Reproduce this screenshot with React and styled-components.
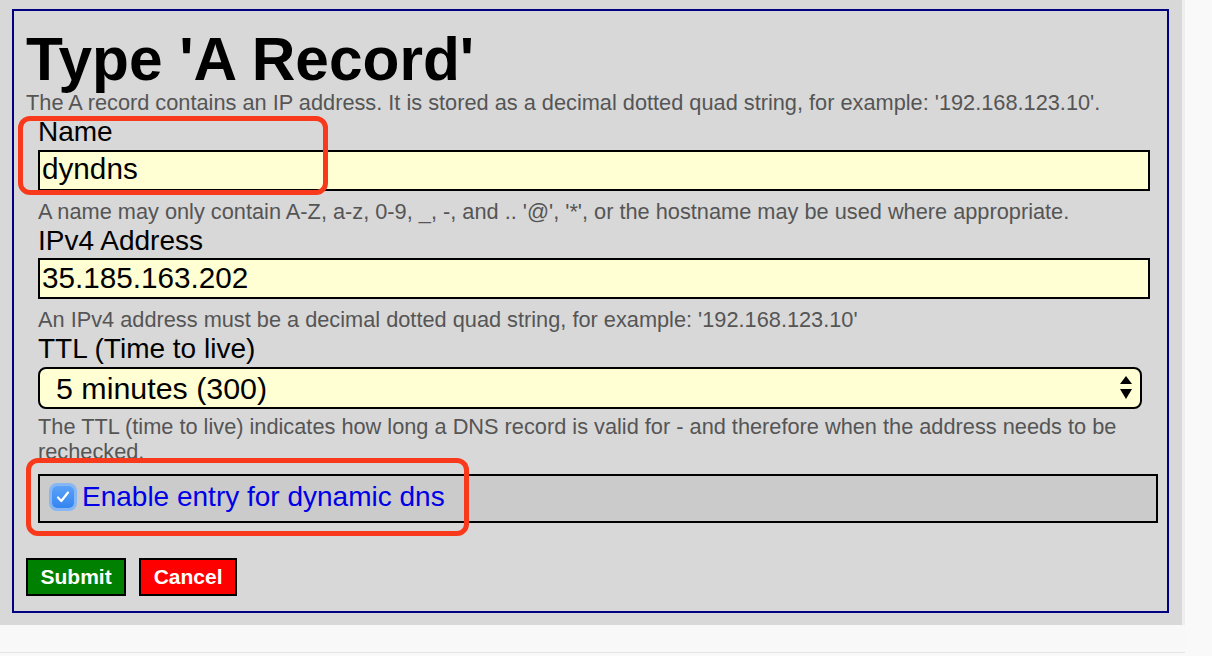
import React from "react";
import styled, { createGlobalStyle } from "styled-components";

const GlobalStyle = createGlobalStyle`
  html, body {
    margin: 0;
    padding: 0;
    background: #f9f9f9;
    font-family: "Liberation Sans", Arial, Helvetica, sans-serif;
  }
  * {
    box-sizing: border-box;
  }
`;

const Screen = styled.div`
  display: flex;
  flex-direction: column;
  width: 1212px;
  height: 656px;
  overflow: hidden;
`;

const Page = styled.div`
  position: relative;
  width: 1185px;
  height: 625px;
  padding: 9px 0 0 12px;
  background: #d8d8d8;
  border-right: 3px solid #eeeeee;
`;

const BottomStrip = styled.div`
  width: 1185px;
  height: 28px;
  border-bottom: 1px solid #e4e4e4;
  background: #f8f8f8;
`;

const Panel = styled.form`
  width: 1157px;
  height: 604px;
  padding: 17px 12px 0;
  border: 2px solid #000080;
  background: #d8d8d8;
`;

const Title = styled.h1`
  margin: 0;
  font-size: 60.4px;
  line-height: 62px;
  font-weight: 700;
  color: #000;
`;

const Description = styled.p`
  margin: ${({ $gap }) => $gap || 0}px 0 0;
  font-size: 21.75px;
  line-height: 25px;
  color: #555;
`;

const FieldGroup = styled.div`
  margin-left: 12px;
`;

const Label = styled.label`
  display: block;
  margin-top: 2px;
  font-size: 28px;
  line-height: 30px;
  color: #000;
`;

const TextInput = styled.input`
  display: block;
  width: 1112px;
  height: 41px;
  margin-top: 2.5px;
  padding: 0 0 2px 2px;
  border: 2px solid #000;
  border-radius: 0;
  background: #ffffd3;
  font-family: inherit;
  font-size: 29.7px;
  color: #000;
  outline: none;
`;

const SelectWrap = styled.div`
  position: relative;
  width: 1104px;
  margin-top: 2.5px;
`;

const Select = styled.select`
  display: block;
  width: 100%;
  height: 42px;
  padding: 0 40px 0 16px;
  border: 2px solid #000;
  border-radius: 8px;
  background: #ffffd3;
  font-family: inherit;
  font-size: 30.4px;
  color: #000;
  appearance: none;
  -webkit-appearance: none;
  outline: none;
`;

const SelectArrows = styled.svg`
  position: absolute;
  top: 9px;
  right: 10px;
  width: 12px;
  height: 23px;
  pointer-events: none;
`;

const CheckRow = styled.label`
  display: flex;
  align-items: center;
  gap: 8px;
  width: 1120px;
  height: 49px;
  margin-top: 10px;
  padding: 0 0 3px 12px;
  border: 2px solid #000;
  background: #cbcbcb;
  cursor: pointer;
`;

const CheckBox = styled.span`
  display: flex;
  align-items: center;
  justify-content: center;
  width: 22px;
  height: 22px;
  border-radius: 5px;
  background: linear-gradient(#5aa2f8, #3585f0);
  box-shadow: 0 0 0 3px #86b6f4;
`;

const CheckText = styled.span`
  font-size: 28px;
  line-height: 30px;
  color: #0000e6;
`;

const Buttons = styled.div`
  display: flex;
  gap: 13px;
  margin-top: 35px;
`;

const Button = styled.button`
  height: 38px;
  padding: 0 12.5px;
  border: 2px solid #000;
  border-radius: 0;
  background: ${({ $tone }) => ($tone === "danger" ? "#ff0000" : "#008000")};
  color: #fff;
  font-family: inherit;
  font-size: 21px;
  font-weight: 700;
  cursor: pointer;
`;

const Highlight = styled.div`
  position: absolute;
  left: ${({ $x }) => $x}px;
  top: ${({ $y }) => $y}px;
  width: ${({ $w }) => $w}px;
  height: ${({ $h }) => $h}px;
  border: 5px solid #f9391b;
  border-radius: 12px;
  pointer-events: none;
`;

const App = () => {
  return (
    <>
      <GlobalStyle />
      <Screen>
        <Page>
          <Panel onSubmit={(e) => e.preventDefault()}>
            <Title>Type 'A Record'</Title>
            <Description>
              The A record contains an IP address. It is stored as a decimal
              dotted quad string, for example: '192.168.123.10'.
            </Description>
            <FieldGroup>
              <Label htmlFor="name">Name</Label>
              <TextInput id="name" defaultValue="dyndns" />
              <Description $gap={8}>
                A name may only contain A-Z, a-z, 0-9, _, -, and .. '@', '*',
                or the hostname may be used where appropriate.
              </Description>

              <Label htmlFor="ipv4">IPv4 Address</Label>
              <TextInput id="ipv4" defaultValue="35.185.163.202" />
              <Description $gap={8}>
                An IPv4 address must be a decimal dotted quad string, for
                example: '192.168.123.10'
              </Description>

              <Label htmlFor="ttl">TTL (Time to live)</Label>
              <SelectWrap>
                <Select id="ttl" defaultValue="300">
                  <option value="60">1 minute (60)</option>
                  <option value="300">5 minutes (300)</option>
                  <option value="3600">1 hour (3600)</option>
                </Select>
                <SelectArrows viewBox="0 0 12 23">
                  <path d="M6 0 L12 8 L0 8 Z" fill="#000" />
                  <path d="M0 13 L12 13 L6 23 Z" fill="#000" />
                </SelectArrows>
              </SelectWrap>
              <Description $gap={5}>
                The TTL (time to live) indicates how long a DNS record is valid
                for - and therefore when the address needs to be rechecked.
              </Description>

              <CheckRow>
                <CheckBox>
                  <svg width="16" height="16" viewBox="0 0 16 16">
                    <path
                      d="M3 8.5 L6.3 12 L13 3.5"
                      fill="none"
                      stroke="#fff"
                      strokeWidth="2.2"
                      strokeLinecap="round"
                      strokeLinejoin="round"
                    />
                  </svg>
                </CheckBox>
                <CheckText>Enable entry for dynamic dns</CheckText>
              </CheckRow>
            </FieldGroup>
            <Buttons>
              <Button type="submit">Submit</Button>
              <Button type="button" $tone="danger">
                Cancel
              </Button>
            </Buttons>
          </Panel>
          <Highlight $x={18} $y={116} $w={310} $h={79} />
          <Highlight $x={26} $y={458} $w={443} $h={78} />
        </Page>
        <BottomStrip />
      </Screen>
    </>
  );
};

export default App;
